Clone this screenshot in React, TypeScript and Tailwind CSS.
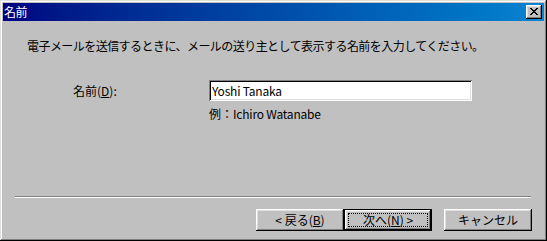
import React from 'react';

const raised =
  'shadow-[inset_-1px_-1px_#000,inset_1px_1px_#fff,inset_-2px_-2px_#808080,inset_2px_2px_#dfdfdf]';

const WizardButton: React.FC<{ label: React.ReactNode; isDefault?: boolean }> = ({ label, isDefault }) => {
  if (isDefault) {
    return (
      <div className="w-[88px] h-[22px] border border-black bg-[#c0c0c0]">
        <div className={`w-full h-full p-[3px] ${raised}`}>
          <div className="w-full h-full border border-dotted border-black flex items-center justify-center">
            {label}
          </div>
        </div>
      </div>
    );
  }
  return (
    <div className={`w-[88px] h-[22px] bg-[#c0c0c0] flex items-center justify-center ${raised}`}>{label}</div>
  );
};

export default function App() {
  return (
    <div
      className="w-[547px] h-[241px] bg-[#c0c0c0] p-[3px] flex flex-col text-[12px] leading-[12px] text-black shadow-[inset_-1px_-1px_#000,inset_1px_1px_#dfdfdf,inset_-2px_-2px_#808080,inset_2px_2px_#fff]"
      style={{ fontFamily: '"Noto Sans CJK JP", "Noto Sans", sans-serif' }}
    >
      {/* Title bar */}
      <div className="h-[18px] flex items-center justify-between pl-[1px] pr-[2px] bg-linear-to-r from-[#000080] to-[#1084d0]">
        <span className="text-white tracking-[-0.5px]">名前</span>
        <div className={`w-[16px] h-[14px] bg-[#c0c0c0] flex items-center justify-center ${raised}`}>
          <svg width="8" height="7" viewBox="0 0 8 7" className="mt-[-1px]">
            <path d="M0 0h2v1h1v1h2V1h1V0h2v1H7v1H6v1H5v1h1v1h1v1h1v1H6V6H5V5H3v1H2v1H0V6h1V5h1V4h1V3H2V2H1V1H0z" fill="#000" />
          </svg>
        </div>
      </div>

      {/* Body */}
      <div className="flex-1 flex flex-col">
        <p className="mt-[19px] ml-[24px] tracking-[-0.55px]">
          電子メールを送信するときに、メールの送り主として表示する名前を入力してください。
        </p>

        <div className="mt-[28px] flex items-center">
          <span className="ml-[70px] w-[136px]">
            名前(<span className="underline">D</span>):
          </span>
          <div className="w-[263px] h-[21px] bg-white shadow-[inset_1px_1px_#808080,inset_-1px_-1px_#fff,inset_2px_2px_#000,inset_-2px_-2px_#dfdfdf] flex items-center pl-[3px]">
            <span className="tracking-[-0.2px]">Yoshi Tanaka</span>
          </div>
        </div>

        <p className="mt-[7px] ml-[206px]">
          例：<span className="tracking-[-0.2px]">Ichiro Watanabe</span>
        </p>

        <div className="mt-[76px] ml-[12px] w-[516px] border-t border-t-[#808080] border-b border-b-white" />

        <div className="mt-[11px] flex items-center ml-[253px]">
          <WizardButton label={<span>&lt; 戻る(<span className="underline">B</span>)</span>} />
          <WizardButton isDefault label={<span>次へ(<span className="underline">N</span>) &gt;</span>} />
          <div className="ml-[12px]">
            <WizardButton label="キャンセル" />
          </div>
        </div>
      </div>
    </div>
  );
}
